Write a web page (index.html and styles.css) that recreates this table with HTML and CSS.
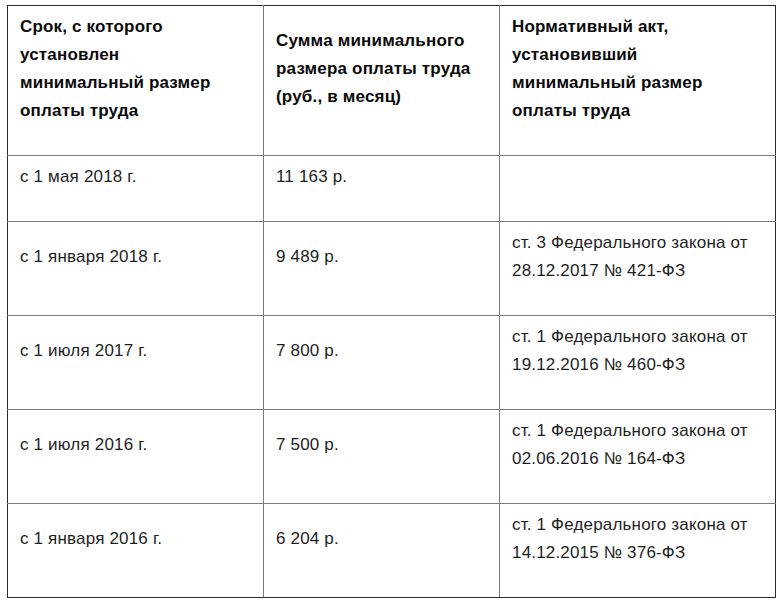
FILE: index.html
```html
<!DOCTYPE html>
<html lang="ru">
<head>
<meta charset="utf-8">
<link rel="stylesheet" href="styles.css">
</head>
<body>
<table class="mrot">
  <colgroup>
    <col class="c1">
    <col class="c2">
    <col class="c3">
  </colgroup>
  <thead>
    <tr>
      <th>Срок, с которого<br>установлен<br>минимальный размер<br>оплаты труда</th>
      <th>Сумма минимального<br>размера оплаты труда<br>(руб., в месяц)</th>
      <th>Нормативный акт,<br>установивший<br>минимальный размер<br>оплаты труда</th>
    </tr>
  </thead>
  <tbody>
    <tr>
      <td>с 1 мая 2018 г.</td>
      <td>11 163 р.</td>
      <td></td>
    </tr>
    <tr>
      <td>с 1 января 2018 г.</td>
      <td>9 489 р.</td>
      <td>ст. 3 Федерального закона от<br>28.12.2017 № 421-ФЗ</td>
    </tr>
    <tr>
      <td>с 1 июля 2017 г.</td>
      <td>7 800 р.</td>
      <td>ст. 1 Федерального закона от<br>19.12.2016 № 460-ФЗ</td>
    </tr>
    <tr>
      <td>с 1 июля 2016 г.</td>
      <td>7 500 р.</td>
      <td>ст. 1 Федерального закона от<br>02.06.2016 № 164-ФЗ</td>
    </tr>
    <tr>
      <td>с 1 января 2016 г.</td>
      <td>6 204 р.</td>
      <td>ст. 1 Федерального закона от<br>14.12.2015 № 376-ФЗ</td>
    </tr>
  </tbody>
</table>
</body>
</html>
```

FILE: styles.css
```css
html, body {
  margin: 0;
  padding: 0;
  background: #ffffff;
}

body {
  font-family: "Liberation Sans", Arial, sans-serif;
  font-size: 17px;
  letter-spacing: 0.18px;
  line-height: 28px;
  color: #1e1e1e;
}

.mrot {
  margin: 5px 0 0 7px;
  border-collapse: collapse;
  table-layout: fixed;
  width: 768px;
  border: 1px solid #2b2b2b;
}

.c1 { width: 256px; }
.c2 { width: 236px; }
.c3 { width: 276px; }

.mrot th,
.mrot td {
  border: 1px solid #7a7a7a;
  padding: 7px 12px 30px 12px;
  vertical-align: middle;
  text-align: left;
  white-space: nowrap;
}

.mrot th {
  font-weight: bold;
  color: #0a0a0a;
}

.mrot tr > :first-child { border-left-color: #2b2b2b; }
.mrot tr > :last-child { border-right-color: #2b2b2b; }
.mrot thead th { border-top-color: #2b2b2b; }
.mrot tbody tr:last-child td { border-bottom-color: #2b2b2b; }
```
